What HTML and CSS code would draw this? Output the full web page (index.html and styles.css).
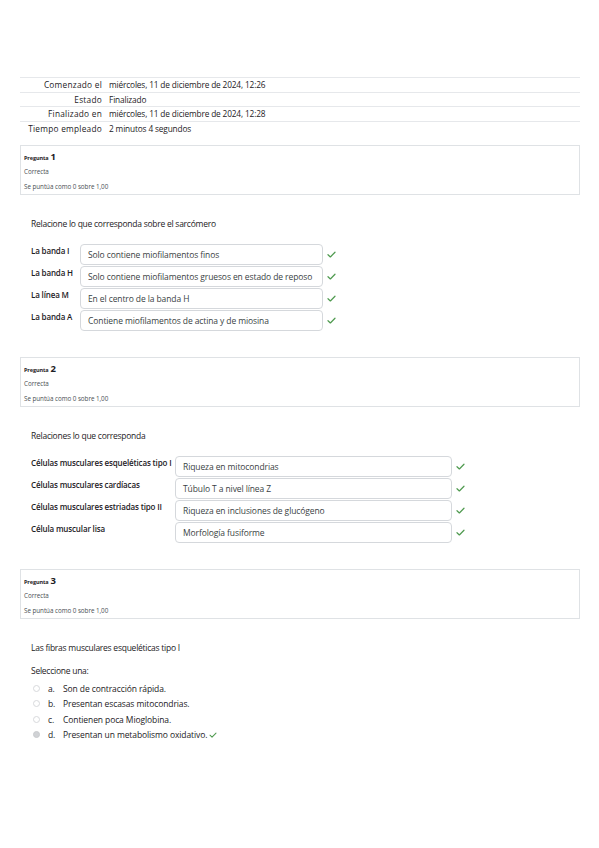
FILE: index.html
```html
<!DOCTYPE html>
<html lang="es">
<head>
<meta charset="utf-8">
<title>Revisión del intento</title>
<link rel="stylesheet" href="styles.css">
</head>
<body>
<div class="page">
  <table class="summary">
    <tr><th>Comenzado el</th><td>miércoles, 11 de diciembre de 2024, 12:26</td></tr>
    <tr><th>Estado</th><td>Finalizado</td></tr>
    <tr><th>Finalizado en</th><td>miércoles, 11 de diciembre de 2024, 12:28</td></tr>
    <tr><th>Tiempo empleado</th><td>2 minutos 4 segundos</td></tr>
  </table>

  <div class="info">
    <div class="qno"><span class="qlabel">Pregunta</span> <span class="qnum">1</span></div>
    <div class="state">Correcta</div>
    <div class="grade">Se puntúa como 0 sobre 1,00</div>
  </div>
  <div class="content">
    <p class="qtext">Relacione lo que corresponda sobre el sarcómero</p>
    <div class="match match-1">
      <div class="mlabel">La banda I</div><div class="mbox">Solo contiene miofilamentos finos</div><svg class="check" viewBox="0 0 10 8"><polyline points="1,4.3 3.7,6.8 9,1.4"/></svg>
      <div class="mlabel">La banda H</div><div class="mbox">Solo contiene miofilamentos gruesos en estado de reposo</div><svg class="check" viewBox="0 0 10 8"><polyline points="1,4.3 3.7,6.8 9,1.4"/></svg>
      <div class="mlabel">La línea M</div><div class="mbox">En el centro de la banda H</div><svg class="check" viewBox="0 0 10 8"><polyline points="1,4.3 3.7,6.8 9,1.4"/></svg>
      <div class="mlabel">La banda A</div><div class="mbox">Contiene miofilamentos de actina y de miosina</div><svg class="check" viewBox="0 0 10 8"><polyline points="1,4.3 3.7,6.8 9,1.4"/></svg>
    </div>
  </div>

  <div class="info">
    <div class="qno"><span class="qlabel">Pregunta</span> <span class="qnum">2</span></div>
    <div class="state">Correcta</div>
    <div class="grade">Se puntúa como 0 sobre 1,00</div>
  </div>
  <div class="content">
    <p class="qtext">Relaciones lo que corresponda</p>
    <div class="match match-2">
      <div class="mlabel">Células musculares esqueléticas tipo I</div><div class="mbox">Riqueza en mitocondrias</div><svg class="check" viewBox="0 0 10 8"><polyline points="1,4.3 3.7,6.8 9,1.4"/></svg>
      <div class="mlabel">Células musculares cardíacas</div><div class="mbox">Túbulo T a nivel línea Z</div><svg class="check" viewBox="0 0 10 8"><polyline points="1,4.3 3.7,6.8 9,1.4"/></svg>
      <div class="mlabel">Células musculares estriadas tipo II</div><div class="mbox">Riqueza en inclusiones de glucógeno</div><svg class="check" viewBox="0 0 10 8"><polyline points="1,4.3 3.7,6.8 9,1.4"/></svg>
      <div class="mlabel">Célula muscular lisa</div><div class="mbox">Morfología fusiforme</div><svg class="check" viewBox="0 0 10 8"><polyline points="1,4.3 3.7,6.8 9,1.4"/></svg>
    </div>
  </div>

  <div class="info">
    <div class="qno"><span class="qlabel">Pregunta</span> <span class="qnum">3</span></div>
    <div class="state">Correcta</div>
    <div class="grade">Se puntúa como 0 sobre 1,00</div>
  </div>
  <div class="content">
    <p class="qtext q3">Las fibras musculares esqueléticas tipo I</p>
    <p class="prompt">Seleccione una:</p>
    <ul class="answers">
      <li><span class="radio"></span><span class="letter">a.</span><span>Son de contracción rápida.</span></li>
      <li><span class="radio"></span><span class="letter">b.</span><span>Presentan escasas mitocondrias.</span></li>
      <li><span class="radio"></span><span class="letter">c.</span><span>Contienen poca Mioglobina.</span></li>
      <li><span class="radio checked"></span><span class="letter">d.</span><span>Presentan un metabolismo oxidativo.</span><svg class="check inline" viewBox="0 0 10 8"><polyline points="1,4.3 3.7,6.8 9,1.4"/></svg></li>
    </ul>
  </div>
</div>
</body>
</html>
```
FILE: styles.css
```css
* { box-sizing: border-box; }
html, body {
  margin: 0;
  padding: 0;
  background: #fff;
}
body {
  font-family: "Open Sans", "Liberation Sans", sans-serif;
  color: #1d2125;
  font-size: 8px;
}
.page {
  padding: 77px 19px 40px 20px;
}
.summary {
  width: 100%;
  border-collapse: collapse;
  font-size: 8.3px;
  letter-spacing: -0.15px;
  margin-bottom: 9px;
}
.summary tr {
  border-top: 1px solid #e6e8eb;
}
.summary th, .summary td {
  height: 14.5px;
  padding: 0;
  vertical-align: middle;
  line-height: 13px;
}
.summary th {
  width: 82px;
  text-align: right;
  font-weight: normal;
  letter-spacing: 0.25px;
  white-space: nowrap;
}
.summary td {
  padding-left: 7px;
}
.info {
  border: 1px solid #dfe2e5;
  height: 50px;
  padding: 4px 4px 0 3px;
}
.qno {
  height: 14px;
  line-height: 14px;
  font-weight: bold;
}
.qlabel {
  font-size: 5.5px;
  letter-spacing: -0.1px;
}
.qnum {
  font-size: 9.5px;
}
.state, .grade {
  font-size: 6.3px;
  color: #4a4f54;
  line-height: 15px;
  letter-spacing: -0.05px;
}
.content {
  padding: 23px 0 0 11px;
  height: 162px;
}
.qtext {
  margin: 0 0 14px 0;
  font-size: 8.5px;
  letter-spacing: -0.25px;
  line-height: 12px;
}
.qtext.q3 {
  margin-bottom: 11px;
}
.match {
  display: grid;
  row-gap: 1px;
  align-items: start;
  justify-content: start;
}
.match-1 { grid-template-columns: 49px 243px 20px; }
.match-2 { grid-template-columns: 144px 277px 20px; }
.mlabel {
  font-size: 8px;
  font-weight: 600;
  letter-spacing: -0.15px;
  line-height: 14px;
  white-space: nowrap;
}
.mbox {
  height: 21px;
  border: 1px solid #d5d8dc;
  border-radius: 4px;
  padding: 0 7px;
  font-size: 8.5px;
  letter-spacing: -0.1px;
  line-height: 19px;
  color: #3a3f44;
  white-space: nowrap;
}
.check {
  width: 9px;
  height: 7px;
  margin: 7px 0 0 4px;
  fill: none;
  stroke: #4f9a4f;
  stroke-width: 1.4;
  stroke-linecap: round;
  stroke-linejoin: round;
}
.check.inline {
  margin: 0 0 0 2px;
  width: 8px;
  height: 6px;
}
.prompt {
  margin: 0 0 4px 0;
  font-size: 8.5px;
  letter-spacing: -0.25px;
  line-height: 12px;
}
.answers {
  list-style: none;
  margin: 0;
  padding: 0 0 0 2px;
  font-size: 8.5px;
  letter-spacing: -0.1px;
}
.answers li {
  display: flex;
  align-items: center;
  height: 15.5px;
}
.radio {
  width: 7px;
  height: 7px;
  border: 1px solid #d7d9dc;
  border-radius: 50%;
  margin-right: 8px;
  flex: none;
}
.radio.checked {
  background: #d0d2d5;
  border-color: #c9cbce;
}
.letter {
  width: 15px;
  flex: none;
}
```
